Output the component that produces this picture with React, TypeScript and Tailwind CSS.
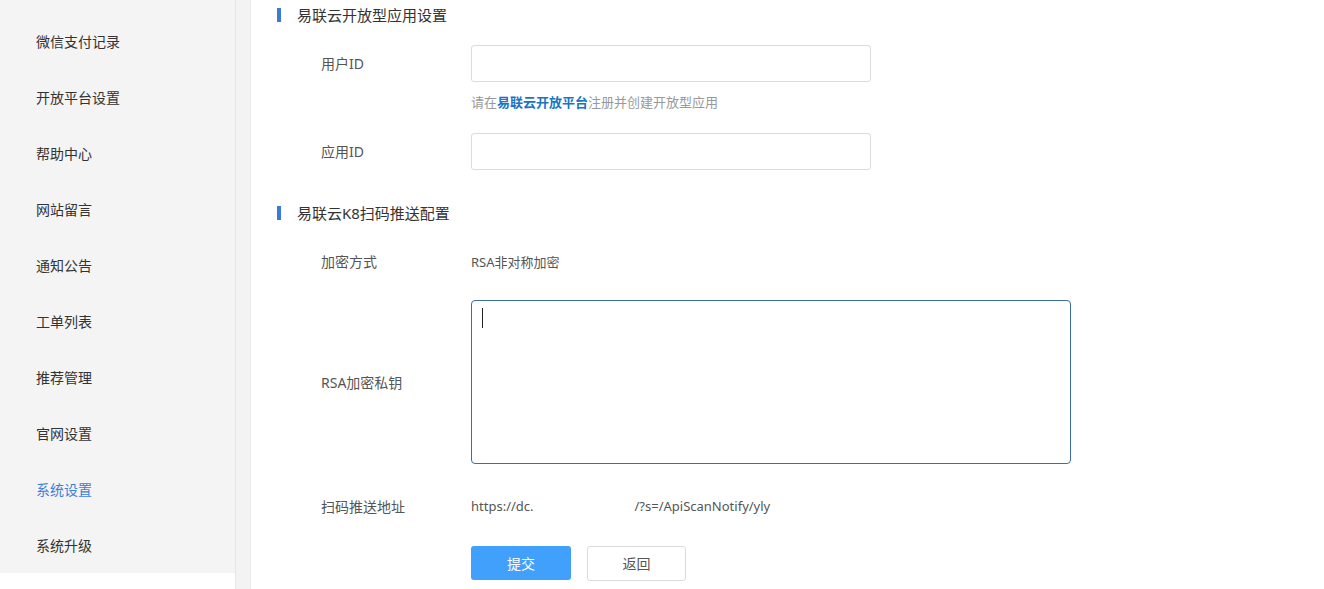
import React from "react";

const menu = ["微信支付记录", "开放平台设置", "帮助中心", "网站留言", "通知公告", "工单列表", "推荐管理", "官网设置", "系统设置", "系统升级"];

function SectionTitle({ children }: { children: React.ReactNode }) {
  return (
    <div className="flex items-center h-[30px] pl-[26px]">
      <span className="w-[4px] h-[14px] bg-[#3a7bd5]" />
      <span className="ml-[16px] text-[15px] text-[#333]">{children}</span>
    </div>
  );
}

function Row({ label, children, className = "" }: { label: string; children: React.ReactNode; className?: string }) {
  return (
    <div className={"flex items-center " + className}>
      <div className="w-[220px] pl-[70px] text-[14px] text-[#555] shrink-0">{label}</div>
      <div className="flex-1">{children}</div>
    </div>
  );
}

export default function App() {
  return (
    <div
      className="flex w-[1324px] h-[589px] overflow-hidden bg-white"
      style={{ fontFamily: '"Noto Sans", "Noto Sans CJK SC", sans-serif' }}
    >
      <aside className="w-[236px] shrink-0 border-r border-[#e6e6e6] flex flex-col">
        <div className="bg-[#f4f4f4] pt-[13px] h-[573px]">
          {menu.map((m) => (
            <div
              key={m}
              className={
                "h-[56px] flex items-center pl-[36px] text-[14px] " +
                (m === "系统设置" ? "text-[#3d7ed8]" : "text-[#333]")
              }
            >
              {m}
            </div>
          ))}
        </div>
        <div className="flex-1 bg-white" />
      </aside>
      <div className="w-[15px] shrink-0 bg-[#f3f3f3] border-r border-[#e8e8e8]" />
      <main className="flex-1">
        <SectionTitle>易联云开放型应用设置</SectionTitle>
        <Row label="用户ID" className="mt-[15px]">
          <div className="w-[400px] h-[37px] border border-[#dcdcdc] rounded-[3px]" />
        </Row>
        <div className="pl-[220px] mt-[12px] text-[13px] text-[#999] leading-[17px]">
          请在<span className="text-[#1a74c4] font-semibold">易联云开放平台</span>注册并创建开放型应用
        </div>
        <Row label="应用ID" className="mt-[22px]">
          <div className="w-[400px] h-[37px] border border-[#dcdcdc] rounded-[3px]" />
        </Row>
        <div className="mt-[28px]">
          <SectionTitle>易联云K8扫码推送配置</SectionTitle>
        </div>
        <Row label="加密方式" className="mt-[21px]">
          <span className="text-[13px] text-[#555]">RSA非对称加密</span>
        </Row>
        <Row label="RSA加密私钥" className="mt-[27px]">
          <div className="w-[600px] h-[164px] border border-[#3b6ea8] rounded-[4px] relative">
            <span className="absolute left-[10px] top-[7px] w-[1px] h-[20px] bg-[#222]" />
          </div>
        </Row>
        <Row label="扫码推送地址" className="mt-[32px]">
          <span className="text-[13px] text-[#555] flex">
            <span>https://dc.</span>
            <span className="w-[101px]" />
            <span>/?s=/ApiScanNotify/yly</span>
          </span>
        </Row>
        <div className="pl-[220px] mt-[29px] flex gap-[16px]">
          <button className="w-[100px] h-[34px] rounded-[3px] bg-[#42a0fd] text-white text-[14px]">提交</button>
          <button className="w-[99px] h-[35px] rounded-[3px] border border-[#dcdcdc] bg-white text-[#555] text-[14px]">返回</button>
        </div>
      </main>
    </div>
  );
}
